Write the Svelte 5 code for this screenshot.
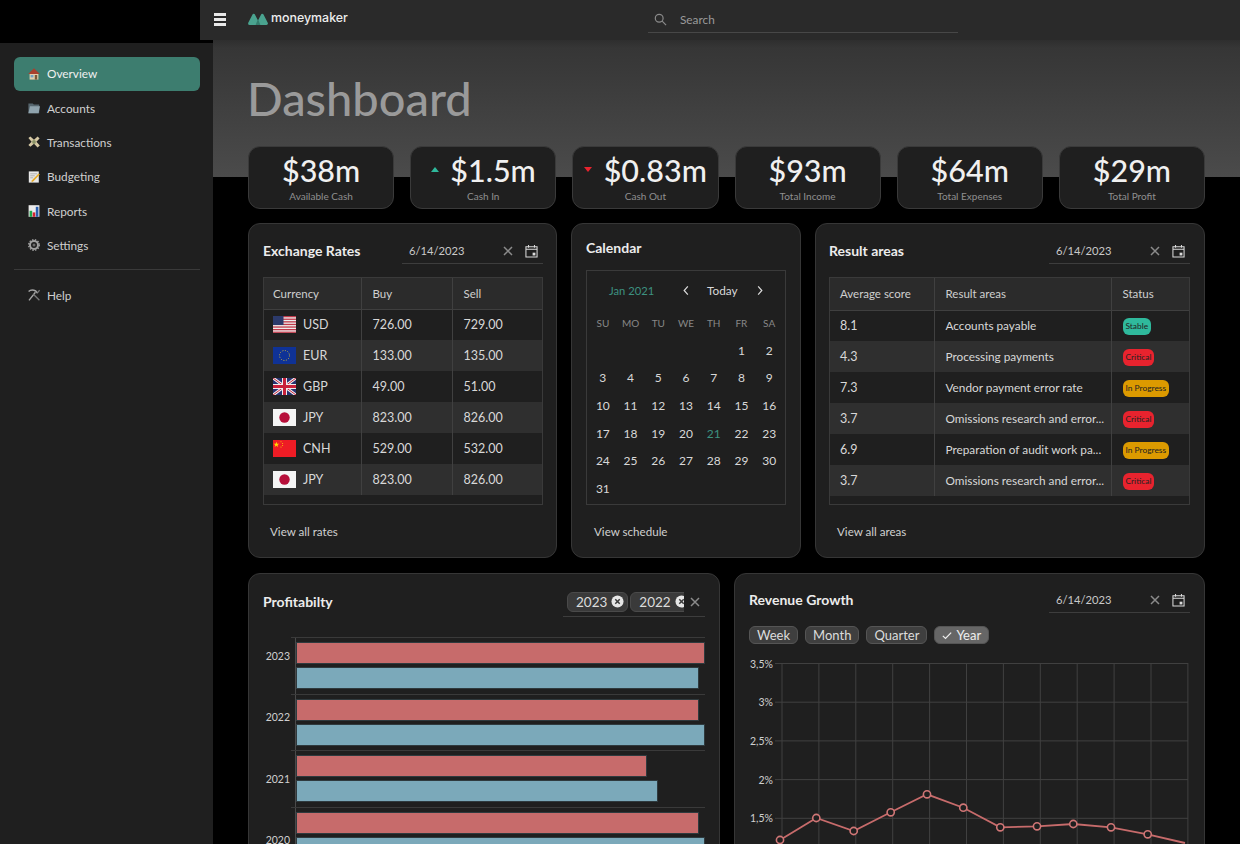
<script>
	const nav = ['Overview', 'Accounts', 'Transactions', 'Budgeting', 'Reports', 'Settings'];
	const stats = [
		{ value: '$38m', label: 'Available Cash' },
		{ value: '$1.5m', label: 'Cash In', arrow: 'up' },
		{ value: '$0.83m', label: 'Cash Out', arrow: 'down' },
		{ value: '$93m', label: 'Total Income' },
		{ value: '$64m', label: 'Total Expenses' },
		{ value: '$29m', label: 'Total Profit' }
	];
	const rates = [
		['USD', '726.00', '729.00'],
		['EUR', '133.00', '135.00'],
		['GBP', '49.00', '51.00'],
		['JPY', '823.00', '826.00'],
		['CNH', '529.00', '532.00'],
		['JPY', '823.00', '826.00']
	];
	const areas = [
		['8.1', 'Accounts payable', 'Stable'],
		['4.3', 'Processing payments', 'Critical'],
		['7.3', 'Vendor payment error rate', 'In Progress'],
		['3.7', 'Omissions research and error...', 'Critical'],
		['6.9', 'Preparation of audit work pa...', 'In Progress'],
		['3.7', 'Omissions research and error...', 'Critical']
	];
	const days = ['SU', 'MO', 'TU', 'WE', 'TH', 'FR', 'SA'];
	const cells = [...Array(5).fill(''), ...Array.from({ length: 31 }, (_, i) => i + 1)];
	const years = ['2023', '2022', '2021', '2020'];
	const bars = [
		{ red: 100, blue: 98.5 },
		{ red: 98.5, blue: 100 },
		{ red: 85.8, blue: 88.5 },
		{ red: 98.5, blue: 100 }
	];

	const gridX = Array.from({ length: 12 }, (_, i) => 37 + i * 36.9);
	const yTicks = ['3,5%', '3%', '2,5%', '2%', '1,5%', '1%'];
	const points = [
		[35, 177], [71.3, 155], [108.7, 168], [145.7, 149.3], [182, 131.3], [218.3, 144.7],
		[255.3, 164.3], [292, 163.3], [328.3, 161], [366, 164.3], [402.7, 171.3], [440, 180]
	];
	const line = points.map((p) => p.join(',')).join(' ');

	function slug(status) {
		return status.toLowerCase().replace(' ', '-');
	}
</script>

{#snippet dateField()}
	<div class="date-field">
		<span>6/14/2023</span>
		<svg class="clear" viewBox="0 0 10 10"><path d="M1 1l8 8M9 1l-8 8" /></svg>
		<svg class="cal" viewBox="0 0 14 14">
			<path d="M1 2.5h12v11h-12zM1 5.2h12M3.8 .6v2.8M10.2 .6v2.8" />
			<rect x="8.2" y="8.8" width="3" height="3" />
		</svg>
	</div>
{/snippet}

{#snippet flag(code)}
	<svg class="flag" viewBox="0 0 23 17">
		{#if code === 'USD'}
			<rect width="23" height="17" fill="#eee" />
			{#each [0, 2.6, 5.2, 7.8, 10.4, 13, 15.6] as y}
				<rect y={y} width="23" height="1.3" fill="#c0394a" />
			{/each}
			<rect width="10.5" height="9" fill="#2c3a6b" />
		{:else if code === 'EUR'}
			<rect width="23" height="17" fill="#0f3296" />
			<circle cx="11.5" cy="8.5" r="5" fill="none" stroke="#c9b23a" stroke-width="1" stroke-dasharray="1 1.6" />
		{:else if code === 'GBP'}
			<rect width="23" height="17" fill="#27316f" />
			<path d="M0 0l23 17M23 0l-23 17" stroke="#eee" stroke-width="3" />
			<path d="M0 0l23 17M23 0l-23 17" stroke="#c8213a" stroke-width="1" />
			<path d="M11.5 0v17M0 8.5h23" stroke="#eee" stroke-width="5" />
			<path d="M11.5 0v17M0 8.5h23" stroke="#c8213a" stroke-width="3" />
		{:else if code === 'JPY'}
			<rect width="23" height="17" fill="#f4f4f4" />
			<circle cx="11.5" cy="8.5" r="5.2" fill="#b70f3a" />
		{:else}
			<rect width="23" height="17" fill="#ee1c25" />
			<path d="M4 1.6l.9 2.5 2.6 0-2.1 1.6.8 2.5-2.2-1.5-2.2 1.5.8-2.5-2.1-1.6 2.6 0z" fill="#ffde00" transform="translate(.2 .4) scale(.8)" />
			<circle cx="8" cy="1.8" r=".5" fill="#ffde00" />
			<circle cx="9.6" cy="3.4" r=".5" fill="#ffde00" />
			<circle cx="9.6" cy="5.4" r=".5" fill="#ffde00" />
			<circle cx="8" cy="7" r=".5" fill="#ffde00" />
		{/if}
	</svg>
{/snippet}

{#snippet navIcon(name)}
	<svg class="nav-icon" viewBox="0 0 12 12">
		{#if name === 'Overview'}
			<path d="M1.6 5h8.8v6.6H1.6z" fill="#e0cfae" />
			<path d="M6 .2L.2 6h11.6z" fill="#a8412f" />
			<rect x="2.6" y="7" width="2.8" height="2.4" fill="#6fa3c8" />
			<rect x="6.8" y="7" width="2.4" height="4.6" fill="#7a5a3a" />
		{:else if name === 'Accounts'}
			<path d="M.4 1.4h4.4l1 1.2h5.4v8.6H.4z" fill="#56666e" />
			<path d="M2 4.2h10l-1.4 7H.4z" fill="#8fa3ad" />
		{:else if name === 'Transactions'}
			<path d="M.4 2l2-1.4 3.6 3.2L9.6.6l2 1.8-3.2 3.4 3.4 3.8-2.2 1.8L6 7.8l-3.6 3L.4 9l3.2-3.2z" fill="#d6c9a4" />
			<circle cx="6" cy="6" r="1.9" fill="#8c9467" />
		{:else if name === 'Budgeting'}
			<rect x=".8" y=".4" width="10" height="11.2" fill="#e8e8e8" />
			<path d="M2.2 2.8h7M2.2 4.8h4.6M2.2 6.8h3" stroke="#999" stroke-width=".7" />
			<path d="M11.8 3.6l-6.6 6.8-1.8.8.6-2 6.6-6.6z" fill="#e6ab28" />
		{:else if name === 'Reports'}
			<rect x=".6" y=".2" width="10.8" height="11.6" fill="#ececec" />
			<rect x="1.6" y="5.8" width="2.6" height="6" fill="#1ea64a" />
			<rect x="4.7" y="7.4" width="2.6" height="4.4" fill="#d4232e" />
			<rect x="7.8" y="1.8" width="2.6" height="10" fill="#2a5fb0" />
		{:else if name === 'Settings'}
			<circle cx="6" cy="6" r="4" fill="none" stroke="#a0a0a0" stroke-width="2" />
			<circle cx="6" cy="6" r="5.3" fill="none" stroke="#a0a0a0" stroke-width="1.4" stroke-dasharray="1.4 1.4" />
			<circle cx="6" cy="6" r="1.5" fill="#6a6a6a" />
		{:else}
			<path d="M1 11.4L7.4 3.2M.6 2.6c2-2 4.8-1.8 7.2-.6l1.8 2.2" stroke="#a5a5a5" stroke-width="1.4" fill="none" />
			<path d="M11.4 11.2L5.4 5.2M11.6 1.2L9.6 3.6" stroke="#777" stroke-width="1.3" fill="none" />
		{/if}
	</svg>
{/snippet}

<div class="page">
	<header class="topbar">
		<div class="burger"><span></span><span></span><span></span></div>
		<div class="brand">
			<svg class="logo" viewBox="0 0 20 12">
				<path d="M1.6 10.4L5.7 2.4 9.8 10.4z" fill="#4aa38f" stroke="#4aa38f" stroke-width="3" stroke-linejoin="round" />
				<path d="M10.2 10.4L14.3 2.4 18.4 10.4z" fill="#4aa38f" stroke="#4aa38f" stroke-width="3" stroke-linejoin="round" />
				<path d="M10 6L7.6 11.9h4.8z" fill="#357d6d" />
			</svg>
			<span>moneymaker</span>
		</div>
		<div class="search">
			<svg viewBox="0 0 14 14"><circle cx="5.6" cy="5.6" r="4.2" /><path d="M8.8 8.8l4.2 4.2" /></svg>
			<span>Search</span>
		</div>
	</header>

	<div class="body">
		<aside class="sidebar">
			<nav>
				{#each nav as item, i}
					<a class="nav-item" class:active={i === 0} href="#top">
						{@render navIcon(item)}
						<span>{item}</span>
					</a>
				{/each}
			</nav>
			<hr />
			<a class="nav-item" href="#top">
				{@render navIcon('Help')}
				<span>Help</span>
			</a>
		</aside>

		<main class="main">
			<h1>Dashboard</h1>

			<section class="stats">
				{#each stats as stat}
					<div class="stat">
						<div class="stat-value">
							{#if stat.arrow}<i class="arrow {stat.arrow}"></i>{/if}
							{stat.value}
						</div>
						<div class="stat-label">{stat.label}</div>
					</div>
				{/each}
			</section>

			<section class="row-one">
				<article class="card rates-card">
					<div class="card-head">
						<h2>Exchange Rates</h2>
						{@render dateField()}
					</div>
					<div class="table-box">
						<table class="rates">
							<thead>
								<tr><th>Currency</th><th>Buy</th><th>Sell</th></tr>
							</thead>
							<tbody>
								{#each rates as rate}
									<tr>
										<td><span class="cur">{@render flag(rate[0])}{rate[0]}</span></td>
										<td>{rate[1]}</td>
										<td>{rate[2]}</td>
									</tr>
								{/each}
							</tbody>
						</table>
					</div>
					<a class="view" href="#top">View all rates</a>
				</article>

				<article class="card">
					<div class="card-head short">
						<h2>Calendar</h2>
					</div>
					<div class="calendar">
						<div class="cal-head">
							<span class="month">Jan 2021</span>
							<svg class="chev" viewBox="0 0 8 12"><path d="M6 1.5L2 6l4 4.5" /></svg>
							<span class="today">Today</span>
							<svg class="chev" viewBox="0 0 8 12"><path d="M2 1.5L6 6l-4 4.5" /></svg>
						</div>
						<div class="cal-grid">
							{#each days as d}<span class="dow">{d}</span>{/each}
							{#each cells as c}<span class:now={c === 21}>{c}</span>{/each}
						</div>
					</div>
					<a class="view wide" href="#top">View schedule</a>
				</article>

				<article class="card areas-card">
					<div class="card-head">
						<h2>Result areas</h2>
						{@render dateField()}
					</div>
					<div class="table-box">
						<table class="areas">
							<thead>
								<tr><th>Average score</th><th>Result areas</th><th>Status</th></tr>
							</thead>
							<tbody>
								{#each areas as area}
									<tr>
										<td>{area[0]}</td>
										<td class="clip">{area[1]}</td>
										<td><span class="badge {slug(area[2])}">{area[2]}</span></td>
									</tr>
								{/each}
							</tbody>
						</table>
					</div>
					<a class="view wide" href="#top">View all areas</a>
				</article>
			</section>

			<section class="row-two">
				<article class="card tall">
					<div class="card-head profit">
						<h2>Profitabilty</h2>
						<div class="multi">
							<div class="tags">
								<span class="tag">2023<svg viewBox="0 0 14 14"><circle cx="7" cy="7" r="6.5" /><path d="M4.6 4.6l4.8 4.8M9.4 4.6l-4.8 4.8" /></svg></span>
								<span class="tag">2022<svg viewBox="0 0 14 14"><circle cx="7" cy="7" r="6.5" /><path d="M4.6 4.6l4.8 4.8M9.4 4.6l-4.8 4.8" /></svg></span>
							</div>
							<svg class="clear" viewBox="0 0 10 10"><path d="M1 1l8 8M9 1l-8 8" /></svg>
						</div>
					</div>
					<div class="bars">
						<div class="years">
							{#each years as year}
								<span>{year}</span>
							{/each}
						</div>
						<div class="plot">
							{#each bars as group}
								<div class="bar-group">
									<div class="bar-track">
										<div class="bar red" style="width:{group.red}%"></div>
										<div class="bar blue" style="width:{group.blue}%"></div>
									</div>
								</div>
							{/each}
						</div>
					</div>
				</article>

				<article class="card tall">
					<div class="card-head rev">
						<h2>Revenue Growth</h2>
						{@render dateField()}
					</div>
					<div class="chips">
						<span class="chip">Week</span>
						<span class="chip">Month</span>
						<span class="chip">Quarter</span>
						<span class="chip on"><svg viewBox="0 0 12 10"><path d="M1 5.5l3.2 3L11 1.5" /></svg>Year</span>
					</div>
					<svg class="line-chart" viewBox="0 0 443 200">
						{#each gridX as x}
							<line x1={x} x2={x} y1="0" y2="200" />
						{/each}
						{#each yTicks as label, i}
							<line x1="30" x2="443" y1={0.5 + i * 38.7} y2={0.5 + i * 38.7} />
							<text x="28" y={4.5 + i * 38.7}>{label}</text>
						{/each}
						<polyline points={line} />
						{#each points.slice(0, 11) as p}
							<circle cx={p[0]} cy={p[1]} r="3.6" />
						{/each}
					</svg>
				</article>
			</section>
		</main>
	</div>
</div>

<style>
	:global(body) {
		margin: 0;
		background: #000;
	}

	.page {
		height: 844px;
		overflow: hidden;
		background: #000;
		color: #e6e6e6;
		font-family: Lato, 'Open Sans', sans-serif;
		font-size: 13px;
	}

	.topbar {
		display: flex;
		align-items: center;
		height: 40px;
		margin-left: 200px;
		padding-left: 14px;
		background: #2a2a2a;
		box-sizing: border-box;
	}

	.burger {
		display: flex;
		flex-direction: column;
		gap: 2px;
		width: 12px;
		margin-top: -2px;
	}

	.burger span {
		height: 3px;
		background: #e8e8e8;
	}

	.brand {
		display: flex;
		align-items: center;
		gap: 3px;
		margin-left: 22px;
		width: 100px;
		margin-top: -6px;
		font-family: Inter, sans-serif;
		font-size: 12.4px;
		font-weight: 500;
		color: #eee;
	}

	.logo {
		width: 20px;
		height: 12px;
		flex: none;
		margin-top: 4px;
	}

	.search {
		display: flex;
		align-items: center;
		gap: 13px;
		width: 304px;
		height: 26px;
		margin-left: 300px;
		margin-top: -1px;
		padding-left: 6px;
		border-bottom: 1px solid #474747;
		color: #9a9a9a;
		font-size: 11.8px;
		box-sizing: content-box;
	}

	.search svg {
		width: 13px;
		height: 13px;
		fill: none;
		stroke: #8a8a8a;
		stroke-width: 1.3;
	}

	.body {
		display: flex;
		height: 804px;
	}

	.sidebar {
		flex: none;
		width: 213px;
		margin-top: 3px;
		padding: 14px 13px 0 14px;
		background: #1f1f1f;
		box-sizing: border-box;
	}

	.sidebar nav {
		display: flex;
		flex-direction: column;
		gap: 0.5px;
	}

	.nav-item {
		display: flex;
		align-items: center;
		gap: 7px;
		height: 34px;
		margin-top: -0.2px;
		padding-left: 14px;
		border-radius: 6px;
		color: #cfcfcf;
		font-size: 11.8px;
		text-decoration: none;
	}

	.nav-item.active {
		background: #3d7d6f;
		color: #f0f0f0;
	}

	.nav-icon {
		width: 12px;
		height: 12px;
		flex: none;
	}

	hr {
		height: 1px;
		margin: 7px 0 8px;
		border: 0;
		background: #3a3a3a;
	}

	.main {
		flex: 1;
		min-width: 0;
		padding: 0 35px;
		background: linear-gradient(#2e2e2e 0, #363636 8px, #4b4b4b 137px, #000 137px);
	}

	h1 {
		height: 60px;
		margin: 0 0 0 -1px;
		padding: 28px 0 18px;
		color: #9a9a9a;
		font-size: 47px;
		font-weight: 500;
		line-height: 60px;
	}

	.stats {
		display: grid;
		grid-template-columns: repeat(6, minmax(0, 1fr));
		gap: 16px;
	}

	.stat {
		height: 63px;
		border: 1px solid #3a3a3a;
		border-radius: 12px;
		background: #1f1f1f;
		text-align: center;
		box-sizing: border-box;
	}

	.stat-value {
		height: 40px;
		margin-top: 3px;
		color: #f0f0f0;
		font-size: 30.5px;
		font-weight: 500;
		line-height: 40px;
	}

	.stat-label {
		color: #8f8f8f;
		font-size: 10px;
		line-height: 13px;
	}

	.arrow {
		display: inline-block;
		width: 0;
		height: 0;
		margin-right: 4px;
		vertical-align: 10px;
		border-left: 4px solid transparent;
		border-right: 4px solid transparent;
	}

	.arrow.up {
		border-bottom: 5px solid #2fb99c;
	}

	.arrow.down {
		border-top: 5px solid #e8232e;
	}

	.row-one {
		display: grid;
		grid-template-columns: 309px 230px 390px;
		gap: 14px;
		margin-top: 14px;
	}

	.row-two {
		display: grid;
		grid-template-columns: 472px 471px;
		gap: 14px;
		margin-top: 15px;
	}

	.card {
		height: 335px;
		padding: 0 14px;
		border: 1px solid #363636;
		border-radius: 12px;
		background: #1f1f1f;
		box-sizing: border-box;
	}

	.card.tall {
		height: 400px;
	}

	.rates-card {
		padding-right: 13px;
	}

	.areas-card {
		padding-left: 13px;
	}

	.card-head {
		display: flex;
		align-items: center;
		justify-content: space-between;
		height: 53px;
	}

	.card-head.short {
		height: 46px;
	}

	.card-head.rev {
		height: 51px;
	}

	.card-head.profit {
		height: 55px;
	}

	h2 {
		margin: 0;
		color: #ececec;
		font-size: 14px;
		font-weight: 700;
	}

	.date-field {
		display: flex;
		align-items: center;
		width: 141px;
		height: 27px;
		padding: 1px 5px 0 7px;
		border-bottom: 1px solid #3d3d3d;
		color: #c9c9c9;
		font-size: 11.2px;
		box-sizing: border-box;
	}

	.date-field span {
		flex: 1;
	}

	.clear {
		width: 10px;
		height: 10px;
		flex: none;
		fill: none;
		stroke: #8b8b8b;
		stroke-width: 1.5;
	}

	.cal {
		width: 13px;
		height: 14px;
		flex: none;
		margin-left: 12px;
		fill: none;
		stroke: #dcdcdc;
		stroke-width: 1.1;
	}

	.cal rect {
		fill: #dcdcdc;
		stroke: none;
	}

	.table-box {
		height: 228px;
		border: 1px solid #3a3a3a;
		box-sizing: border-box;
		color: #d8d8d8;
		font-size: 12.5px;
	}

	table {
		width: 100%;
		border-collapse: collapse;
		table-layout: fixed;
	}

	th {
		height: 31px;
		padding: 0 0 0 11px;
		background: #2b2b2b;
		border-bottom: 1px solid #3f3f3f;
		color: #cfcfcf;
		font-size: 11.5px;
		font-weight: 400;
		text-align: left;
	}

	td {
		height: 31px;
		padding: 0 0 0 11px;
	}

	th,
	td {
		border-right: 1px solid #404040;
		box-sizing: border-box;
	}

	th:last-child,
	td:last-child {
		border-right: 0;
	}

	tbody tr:nth-child(even) {
		background: #2f2f2f;
	}

	.rates th:nth-child(1) {
		width: 97px;
	}

	.rates th:nth-child(2) {
		width: 91px;
	}

	.rates th:first-child,
	.rates td:first-child {
		padding-left: 9px;
	}

	.areas th {
		height: 32px;
	}

	.areas td {
		font-size: 11.8px;
	}

	.areas th:first-child,
	.areas td:first-child {
		padding-left: 10px;
		font-size: 12.5px;
	}

	.areas th:first-child {
		font-size: 11.5px;
	}

	.areas th:nth-child(1) {
		width: 104px;
	}

	.areas th:nth-child(2) {
		width: 177px;
	}

	.clip {
		white-space: nowrap;
	}

	.cur {
		display: flex;
		align-items: center;
		gap: 7px;
	}

	.flag {
		width: 23px;
		height: 17px;
		flex: none;
	}

	.badge {
		display: inline-block;
		padding: 0 3px;
		border-radius: 6px;
		color: #222;
		font-size: 8.4px;
		line-height: 17px;
	}

	.stable {
		background: #2fb99c;
	}

	.critical {
		background: #e8232e;
	}

	.in-progress {
		background: #dc9a00;
	}

	.view {
		display: block;
		margin: 19px 0 0 7px;
		color: #d0d0d0;
		font-size: 11.6px;
		line-height: 15px;
		text-decoration: none;
	}

	.view.wide {
		margin-left: 8px;
	}

	.calendar {
		height: 235px;
		padding: 0 2px;
		border: 1px solid #3a3a3a;
		box-sizing: border-box;
	}

	.cal-head {
		display: flex;
		align-items: center;
		height: 38px;
		padding-left: 20px;
		font-size: 11.8px;
	}

	.month {
		width: 73px;
		color: #3d9180;
		font-size: 11.2px;
	}

	.today {
		margin: 0 18px 0 17px;
		color: #d8d8d8;
	}

	.chev {
		width: 8px;
		height: 11px;
		fill: none;
		stroke: #dcdcdc;
		stroke-width: 1.3;
	}

	.cal-grid {
		display: grid;
		grid-template-columns: repeat(7, 1fr);
		grid-auto-rows: 27.6px;
		align-items: center;
		color: #d8d8d8;
		font-size: 12px;
		text-align: center;
	}

	.dow {
		color: #878787;
		font-size: 10px;
	}

	.now {
		color: #3d9180;
	}

	.multi {
		display: flex;
		align-items: center;
		flex: none;
		width: 142px;
		height: 30px;
		margin-top: 1px;
		padding-left: 4px;
		border-bottom: 1px solid #3d3d3d;
		box-sizing: border-box;
	}

	.tags {
		display: flex;
		gap: 2px;
		flex: none;
		width: 117px;
		overflow: hidden;
	}

	.multi .clear {
		margin-left: 6px;
	}

	.tag {
		display: inline-flex;
		align-items: center;
		flex: none;
		gap: 4px;
		height: 20px;
		padding: 0 3px 0 8px;
		border: 1px solid #4a4a4a;
		border-radius: 6px;
		background: #3a3a3a;
		color: #dcdcdc;
		font-size: 13.5px;
		box-sizing: border-box;
	}

	.tag svg {
		width: 13px;
		height: 13px;
	}

	.tag circle {
		fill: #e6e6e6;
	}

	.tag path {
		stroke: #3a3a3a;
		stroke-width: 1.6;
	}

	.bars {
		display: flex;
		margin-top: 8px;
	}

	.years {
		display: flex;
		flex: none;
		flex-direction: column;
		width: 27px;
		padding-top: 13px;
		color: #cfcfcf;
		font-size: 10.5px;
		text-align: right;
	}

	.years span {
		height: 61.3px;
		line-height: 13px;
	}

	.plot {
		flex: 1;
		margin-left: 1px;
	}

	.bar-group {
		height: 56.5px;
		padding-left: 4px;
		border-top: 1px solid #3a3a3a;
		box-sizing: border-box;
	}

	.bar-track {
		display: flex;
		flex-direction: column;
		gap: 3px;
		height: 100%;
		padding-top: 4px;
		border-left: 1px solid #4a4a4a;
		box-sizing: border-box;
	}

	.bar {
		flex: none;
		height: 22px;
		box-sizing: border-box;
		border: 1px solid #2f3a3e;
	}

	.bar.red {
		background: #c76b6b;
	}

	.bar.blue {
		background: #7ba9ba;
	}

	.chips {
		display: flex;
		gap: 7px;
		margin-top: 1px;
	}

	.chip {
		display: inline-flex;
		align-items: center;
		gap: 4px;
		height: 18px;
		padding: 0 7px;
		border: 1px solid #555;
		border-radius: 6px;
		background: #3f3f3f;
		color: #dcdcdc;
		font-size: 13px;
		box-sizing: border-box;
	}

	.chip.on {
		background: #666;
		color: #eee;
	}

	.chip svg {
		width: 10px;
		height: 9px;
		fill: none;
		stroke: #eee;
		stroke-width: 1.5;
	}

	.line-chart {
		display: block;
		width: 443px;
		height: 200px;
		margin: 19px 0 0 -4px;
		overflow: visible;
	}

	.line-chart line {
		stroke: #404040;
		stroke-width: 1;
	}

	.line-chart text {
		fill: #cfcfcf;
		font-size: 10.5px;
		text-anchor: end;
	}

	.line-chart polyline {
		fill: none;
		stroke: #c76b6b;
		stroke-width: 1.8;
	}

	.line-chart circle {
		fill: #1f1f1f;
		stroke: #d07676;
		stroke-width: 1.6;
	}
</style>
